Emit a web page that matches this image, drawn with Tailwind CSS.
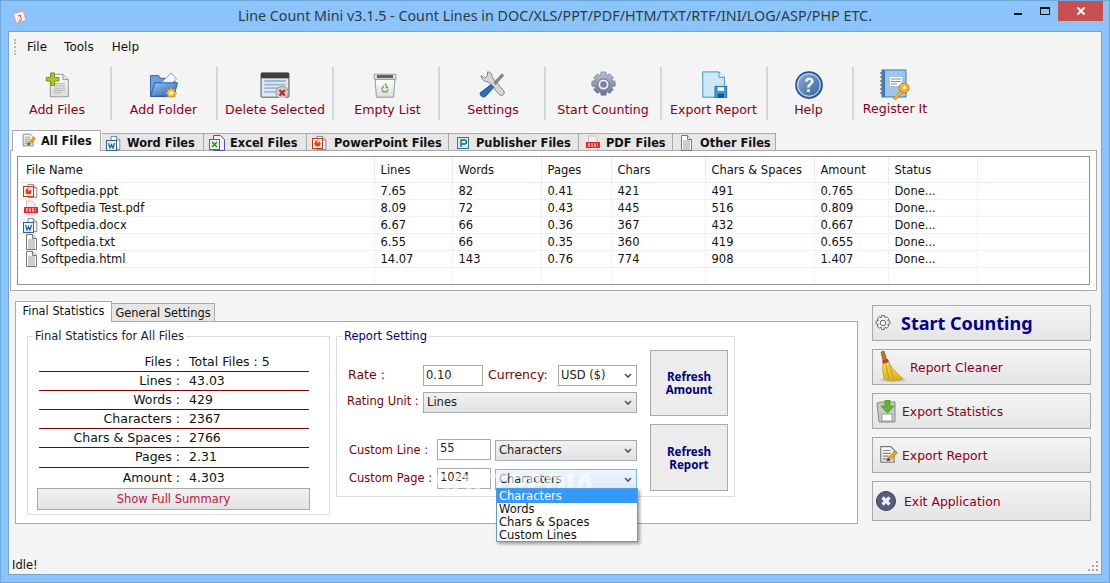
<!DOCTYPE html>
<html lang="en">
<head>
  <meta charset="UTF-8" />
  <title>Line Count Mini v3.1.5</title>
  <script src="https://cdn.jsdelivr.net/npm/@tailwindcss/browser@4"></script>
</head>
<body class="overflow-hidden">
  <!-- shared icon symbols -->
  <svg class="absolute w-0 h-0">
    <defs>
      <linearGradient id="gBlue" x1="0" y1="0" x2="1" y2="1"><stop offset="0" stop-color="#9fc8ee"/><stop offset="1" stop-color="#1c5fb8"/></linearGradient>
      <linearGradient id="gPage" x1="0" y1="0" x2="0" y2="1"><stop offset="0" stop-color="#ffffff"/><stop offset="1" stop-color="#dcdcd8"/></linearGradient>
      <linearGradient id="gHelp" x1="0" y1="0" x2="1" y2="1"><stop offset="0" stop-color="#8fb0d6"/><stop offset="1" stop-color="#2f5f9e"/></linearGradient>
      <linearGradient id="gGear" x1="0" y1="0" x2="0" y2="1"><stop offset="0" stop-color="#b9bfd8"/><stop offset="1" stop-color="#6a7090"/></linearGradient>
      <linearGradient id="gBroom" x1="0" y1="0" x2="0" y2="1"><stop offset="0" stop-color="#f5e25a"/><stop offset="1" stop-color="#dcae16"/></linearGradient>
      <symbol id="page" viewBox="0 0 16 16"><path d="M3.5.5h6l4 4v11h-10z" fill="#fff" stroke="#77787c"/><path d="M9.5.5v4h4" fill="#e6e6e6" stroke="#77787c"/></symbol>
      <symbol id="lines" viewBox="0 0 16 16"><use href="#page"/><path d="M5 6h7M5 8h7M5 10h7M5 12h7M5 14h7" stroke="#9a9a9a"/></symbol>
      <symbol id="ppt" viewBox="0 0 16 16"><use href="#page" x="2" width="14" height="16"/><rect x=".5" y="3.5" width="10" height="10" fill="#fbeee6" stroke="#c8390f"/><circle cx="5.5" cy="8.500" r="3" fill="#d8411a"/><path d="M5.500 8.500V6h2.500z" fill="#fff"/></symbol>
      <symbol id="word" viewBox="0 0 16 16"><use href="#page" x="2" width="14" height="16"/><rect x=".5" y="5.500" width="10" height="10" fill="#eaf1fa" stroke="#2c5fa5"/><polyline points="2.500,8 4,13 5.500,9.500 7,13 8.500,8" fill="none" stroke="#2c5fa5" stroke-width="1.200"/></symbol>
      <symbol id="excel" viewBox="0 0 16 16"><path d="M4.500.5h7l4 4v11h-11z" fill="#eef" stroke="#4a52a8"/><rect x=".5" y="4.500" width="10" height="10" fill="#e8f4e8" stroke="#2e8a36"/><path d="M3 7l5 5M8 7l-5 5" stroke="#1f7a2a" stroke-width="1.300"/></symbol>
      <symbol id="pdf" viewBox="0 0 16 16"><path d="M3.500 1h6l3 3v4h-9z" fill="#eee" stroke="#c9c9c9"/><rect x="1" y="7" width="14" height="6" fill="#e0282c"/><path d="M3 9h10M3 11h10" stroke="#fff" stroke-dasharray="2 1"/><path d="M3.500 13v2h9v-2" fill="#eee" stroke="#c9c9c9"/></symbol>
      <symbol id="pub" viewBox="0 0 16 16"><rect x="2.500" y="2.500" width="11" height="11" fill="#d7ecec" stroke="#2f7d8c"/><path d="M6 12V5h3.500a1.800 1.800 0 010 4H6" fill="none" stroke="#1f6b7c" stroke-width="1.400"/></symbol>
      <symbol id="note" viewBox="0 0 18 18"><path d="M2.500 1.500h9l3 3v11h-12z" fill="url(#gPage)" stroke="#77787c"/><path d="M4.500 5h7M4.500 7.500h7M4.500 10h5M4.500 12.500h4" stroke="#8a8a8a"/><path d="M8 14.500l1-3 6.500-6.500 2 2-6.500 6.500z" fill="#f2a020" stroke="#b8650c" stroke-width=".6"/><path d="M8 14.500l1-3 2 2z" fill="#3a3a3a"/></symbol>
    </defs>
  </svg>

  <div class="w-[1110px] h-[583px] bg-[#8ac4fb] border border-[#6fa6d8] flex flex-col font-['DejaVu_Sans',sans-serif] text-[#111]">
    <!-- title bar -->
    <div class="h-[30px] flex items-center relative shrink-0">
      <svg class="absolute left-[10px] top-[7px] w-[17px] h-[17px]" viewBox="0 0 17 17"><path d="M2 4l10-2.500 3 11-10 2.500z" fill="#f6f3ef" stroke="#b7b0b8"/><path d="M2.500 4l9.500-2.400.5 2-9.500 2.400z" fill="#b8acc6"/><path d="M7 8l3-.8-1 2 1.500 1-.5 2-2.500.6" fill="none" stroke="#e8504a"/></svg>
      <div class="w-full text-center font-['Noto_Sans',sans-serif] text-[14.300px] text-[#2e3a44] whitespace-nowrap">Line Count Mini v3.1.5 - Count Lines in DOC/XLS/PPT/PDF/HTM/TXT/RTF/INI/LOG/ASP/PHP ETC.</div>
      <div class="absolute left-[1013px] top-0 flex items-start">
        <div class="w-[8px] h-[2px] bg-[#111] mt-[12px]"></div>
        <div class="w-[10px] h-[8px] border border-[#111] border-t-2 mt-[6px] ml-[18px]"></div>
        <div class="w-[45px] h-[20px] bg-[#c75050] ml-[8px] flex items-center justify-center">
          <svg class="w-[10px] h-[10px]" viewBox="0 0 10 10"><path d="M1.500 1.500l7 7M8.500 1.500l-7 7" stroke="#fff" stroke-width="1.800"/></svg>
        </div>
      </div>
    </div>

    <!-- client area -->
    <div class="ml-[7px] w-[1094px] h-[544px] bg-[#f4f4f4] border border-[#6fa6d8] flex flex-col relative">
      <!-- menu -->
      <div class="h-[30px] flex items-center text-[12px] shrink-0 relative">
        <div class="ml-[5px] w-[2px] h-[16px] border-l-2 border-dotted border-[#bbb]"></div>
        <span class="ml-[11px]">File</span>
        <span class="ml-[17px]">Tools</span>
        <span class="ml-[18px]">Help</span>
      </div>

      <!-- toolbar -->
      <div class="h-[64px] flex shrink-0 border-b border-[#f9f9f9] text-[#8b0018] text-[12.600px]">
        <div class="w-[103px] pr-[5px] my-[5px] border-r-2 border-[#d6d6d6] flex flex-col items-center">
          <svg class="w-[28px] h-[29px] mt-[5px] ml-[1px]" viewBox="0 0 28 29"><path d="M5.500 2.500h14l6 6v19h-20z" fill="url(#gPage)" stroke="#8d8d8a"/><path d="M19.500 2.500v6h6" fill="#e4e4e0" stroke="#8d8d8a"/><path d="M9 13h13M9 15.500h13M9 18h13M9 20.500h13M9 23h9" stroke="#a8a8a8"/><path d="M6 1h4v5h5v4h-5v5H6v-5H1V6h5z" fill="#a9cc2a" stroke="#6a8a10"/></svg>
          <span class="mt-[3px]">Add Files</span>
        </div>
        <div class="w-[106px] my-[5px] border-r-2 border-[#d6d6d6] flex flex-col items-center">
          <svg class="w-[32px] h-[29px] mt-[5px]" viewBox="0 0 32 29"><path d="M1 4h9l2 3h16v20H1z" fill="#6aa0e0" stroke="#2b5ea8"/><path d="M12 13L24 1l6 7-8 7z" fill="#f4f8fc" stroke="#7d97bd"/><path d="M1 27l5-15h25l-4 15z" fill="url(#gBlue)" stroke="#1f55a2"/><path d="M24 17l1.500 3 3-1-1 3 3 1.500-3 1.500 1 3-3-1-1.500 3-1.500-3-3 1 1-3-3-1.500 3-1.500-1-3 3 1z" fill="#fbc42a" stroke="#d98a0a" stroke-width=".5"/><circle cx="24" cy="23.500" r="2" fill="#fff4b0"/></svg>
          <span class="mt-[3px] -ml-[1px]">Add Folder</span>
        </div>
        <div class="w-[116px] my-[5px] border-r-2 border-[#d6d6d6] flex flex-col items-center">
          <svg class="w-[32px] h-[29px] mt-[5px] -ml-[1px]" viewBox="0 0 32 29"><rect x=".5" y="1" width="31" height="27" rx="1" fill="#dfe6ee" stroke="#444"/><rect x=".5" y="1" width="31" height="6" fill="#3e3e3e"/><path d="M4 10h24M4 14h24M4 18h20M4 22h18" stroke="#9cbad6" stroke-width="2"/><circle cx="24" cy="23" r="7" fill="#cfcfcf" stroke="#8a8a8a"/><path d="M21 20l6 6M27 20l-6 6" stroke="#d8182a" stroke-width="2.400"/></svg>
          <span class="mt-[3px]">Delete Selected</span>
        </div>
        <div class="w-[106px] my-[5px] border-r-2 border-[#d6d6d6] flex flex-col items-center">
          <svg class="w-[26px] h-[29px] mt-[5px] -ml-[2px]" viewBox="0 0 26 29"><path d="M2 8h22l-1.500 20h-19z" fill="url(#gPage)" stroke="#8d8d8a"/><path d="M1 2.500h24V8H1z" fill="#ececea" stroke="#8d8d8a"/><rect x="4" y="3.500" width="18" height="3" fill="#555"/><path d="M13 13l2.500 4-2 .5M9.500 19l2-3.500M16.500 19l-1.500 3h-4l-1.500-3" fill="none" stroke="#66b04a" stroke-width="1.600"/></svg>
          <span class="mt-[3px] ml-[3px]">Empty List</span>
        </div>
        <div class="w-[106px] my-[5px] border-r-2 border-[#d6d6d6] flex flex-col items-center">
          <svg class="w-[30px] h-[30px] mt-[4px]" viewBox="0 0 30 30"><path d="M10 1c3 0 5 2 5 5l1 2 12 14c2 3-2 7-5 4L11 12c-4 0-8-2-8-7l4 3 3-3z" fill="#d6d6d6" stroke="#777"/><path d="M26 3l2 2-9 10-2-2z" fill="#8a8a8a" stroke="#555" stroke-width=".6"/><path d="M14 15l3 3-9 10c-2 2-7 0-6-4z" fill="#2f6fbf" stroke="#1b4c90"/></svg>
          <span class="mt-[3px] ml-[2px]">Settings</span>
        </div>
        <div class="w-[116px] my-[5px] border-r-2 border-[#d6d6d6] flex flex-col items-center">
          <svg class="w-[29px] h-[30px] mt-[4px]" viewBox="0 0 29 29"><path d="M12 1h5l1 4 3-2 4 4-2 3 4 1v5l-4 1 2 3-4 4-3-2-1 4h-5l-1-4-3 2-4-4 2-3-4-1v-5l4-1-2-3 4-4 3 2z" fill="url(#gGear)" stroke="#6a6a80" stroke-width=".6"/><circle cx="14.500" cy="14.500" r="6" fill="#eef0f6" stroke="#5c6080"/><circle cx="14.500" cy="14.500" r="3.500" fill="#7a809e"/></svg>
          <span class="mt-[3px]">Start Counting</span>
        </div>
        <div class="w-[106px] my-[5px] border-r-2 border-[#d6d6d6] flex flex-col items-center">
          <svg class="w-[29px] h-[30px] mt-[4px]" viewBox="0 0 29 30"><path d="M1.500 1h18l6 6v22h-24z" fill="#cfe6f6" stroke="#2a8ec8"/><path d="M19.500 1v6h6" fill="#fff" stroke="#2a8ec8"/><rect x="15" y="17" width="13" height="13" fill="#3a9ad8" stroke="#1f6ea6"/><rect x="18" y="18" width="7" height="4" fill="#fff"/><rect x="18" y="25" width="7" height="5" fill="#0f5a8c"/></svg>
          <span class="mt-[3px] -ml-[1px]">Export Report</span>
        </div>
        <div class="w-[86px] my-[5px] border-r-2 border-[#d6d6d6] flex flex-col items-center">
          <svg class="w-[30px] h-[30px] mt-[4px] -ml-[3px]" viewBox="0 0 30 30"><circle cx="15" cy="15" r="14" fill="url(#gHelp)" stroke="#1f4f8f" stroke-width="1.500"/><circle cx="15" cy="15" r="12" fill="none" stroke="#dfe8f2"/><path d="M10.500 11.500c0-6 9.500-6 9.500-.5 0 3.500-4 3.500-4 6.500h-3c0-4 4-4 4-6.500 0-2-3.200-2-3.500.5z" fill="#e8eef6"/><rect x="13" y="19.500" width="3" height="3" fill="#e8eef6"/></svg>
          <span class="mt-[2px] -ml-[3px]">Help</span>
        </div>
        <div class="w-[84px] flex flex-col items-center">
          <svg class="w-[32px] h-[33px] mt-[6px] -ml-[2px]" viewBox="0 0 32 33"><rect x="3" y="2" width="24" height="27" fill="#9cc6ec" stroke="#3a78b8"/><rect x="3" y="2" width="3" height="27" fill="#3a78b8"/><rect x="11" y="9" width="12" height="9" fill="#fff"/><path d="M12 11h10M12 13.500h10M12 16h6" stroke="#888"/><path d="M1 5h4M1 9h4M1 13h4M1 17h4M1 21h4M1 25h4" stroke="#777" stroke-width="1.400"/><circle cx="25" cy="20" r="5" fill="#f2b23c" stroke="#c47e12"/><circle cx="25.500" cy="19.500" r="1.500" fill="#fff"/><path d="M22 23l-8 7 2 2 3-2 1-2 4-3z" fill="#f2b23c" stroke="#c47e12" stroke-width=".7"/></svg>
          <span class="-mt-[1px] -ml-[2px]">Register It</span>
        </div>
      </div>

      <!-- file type tabs -->
      <div class="flex items-end h-[25px] ml-[3px] text-[11.400px] font-bold shrink-0 relative z-10">
        <div class="h-[21px] w-[89px] bg-white border border-[#a9a9a9] border-b-0 flex items-center pl-[8px] pt-[1px] gap-[5px] text-[#111]"><svg class="w-[15px] h-[15px] -mt-[3px]" viewBox="0 0 18 18"><use href="#note"/></svg>All Files</div>
        <div class="h-[18px] w-[102px] bg-[#e6e6e6] border border-[#a9a9a9] border-l-0 flex items-center pl-[4px] pt-[4px] gap-[5px] ml-[1px]"><svg class="w-[16px] h-[16px] -mt-[3px]"><use href="#word"/></svg>Word Files</div>
        <div class="h-[18px] w-[103px] bg-[#e6e6e6] border border-[#a9a9a9] border-l-0 flex items-center pl-[5px] pt-[4px] gap-[5px]"><svg class="w-[16px] h-[16px] -mt-[3px]"><use href="#excel"/></svg>Excel Files</div>
        <div class="h-[18px] w-[142px] bg-[#e6e6e6] border border-[#a9a9a9] border-l-0 flex items-center pl-[5px] pt-[4px] gap-[6px]"><svg class="w-[16px] h-[16px] -mt-[3px]"><use href="#ppt"/></svg>PowerPoint Files</div>
        <div class="h-[18px] w-[130px] bg-[#e6e6e6] border border-[#a9a9a9] border-l-0 flex items-center pl-[6px] pt-[4px] gap-[5px]"><svg class="w-[16px] h-[16px] -mt-[3px]"><use href="#pub"/></svg>Publisher Files</div>
        <div class="h-[18px] w-[94px] bg-[#e6e6e6] border border-[#a9a9a9] border-l-0 flex items-center pl-[6px] pt-[4px] gap-[5px]"><svg class="w-[16px] h-[16px] -mt-[3px]"><use href="#pdf"/></svg>PDF Files</div>
        <div class="h-[18px] w-[103px] bg-[#e6e6e6] border border-[#a9a9a9] border-l-0 flex items-center pl-[5px] pt-[4px] gap-[6px]"><svg class="w-[16px] h-[16px] -mt-[3px]"><use href="#lines"/></svg>Other Files</div>
      </div>

      <!-- file list panel -->
      <div class="ml-[1px] w-[1087px] h-[141px] -mt-[1px] bg-white border border-[#a9a9a9] px-[6px] pt-[5px] shrink-0">
        <div class="h-[129px] border border-[#8f8f8f] text-[11.500px] leading-[15px] overflow-hidden">
          <table class="table-fixed w-[1071px] border-collapse">
            <colgroup><col class="w-[356px]"/><col class="w-[78px]"/><col class="w-[89px]"/><col class="w-[70px]"/><col class="w-[94px]"/><col class="w-[109px]"/><col class="w-[74px]"/><col class="w-[89px]"/><col/></colgroup>
            <thead>
              <tr class="h-[25px] text-left border-b border-[#e4ecf6]">
                <th class="font-normal pl-[8px] pt-[2px] border-r border-[#e4ecf6]">File Name</th><th class="font-normal pl-[6px] pt-[2px] border-r border-[#e4ecf6]">Lines</th><th class="font-normal pl-[6px] pt-[2px] border-r border-[#e4ecf6]">Words</th><th class="font-normal pl-[6px] pt-[2px] border-r border-[#e4ecf6]">Pages</th><th class="font-normal pl-[6px] pt-[2px] border-r border-[#e4ecf6]">Chars</th><th class="font-normal pl-[6px] pt-[2px] border-r border-[#e4ecf6]">Chars &amp; Spaces</th><th class="font-normal pl-[6px] pt-[2px] border-r border-[#e4ecf6]">Amount</th><th class="font-normal pl-[6px] pt-[2px] border-r border-[#e4ecf6]">Status</th><th></th>
              </tr>
            </thead>
            <tbody>
              <tr class="h-[17px] border-b border-[#eef2f8]"><td class="border-r border-[#eef2f8] pl-[5px]"><div class="flex items-center h-[16px] gap-[2px] pt-[1px]"><svg class="w-[16px] h-[16px] shrink-0 -mt-[1px]"><use href="#ppt"/></svg>Softpedia.ppt</div></td><td class="border-r border-[#eef2f8] pl-[6px] pt-[1px]">7.65</td><td class="border-r border-[#eef2f8] pl-[6px] pt-[1px]">82</td><td class="border-r border-[#eef2f8] pl-[6px] pt-[1px]">0.41</td><td class="border-r border-[#eef2f8] pl-[6px] pt-[1px]">421</td><td class="border-r border-[#eef2f8] pl-[6px] pt-[1px]">491</td><td class="border-r border-[#eef2f8] pl-[6px] pt-[1px]">0.765</td><td class="border-r border-[#eef2f8] pl-[6px] pt-[1px]">Done...</td><td></td></tr>
              <tr class="h-[17px] border-b border-[#eef2f8]"><td class="border-r border-[#eef2f8] pl-[5px]"><div class="flex items-center h-[16px] gap-[2px] pt-[1px]"><svg class="w-[16px] h-[16px] shrink-0 -mt-[1px]"><use href="#pdf"/></svg>Softpedia Test.pdf</div></td><td class="border-r border-[#eef2f8] pl-[6px] pt-[1px]">8.09</td><td class="border-r border-[#eef2f8] pl-[6px] pt-[1px]">72</td><td class="border-r border-[#eef2f8] pl-[6px] pt-[1px]">0.43</td><td class="border-r border-[#eef2f8] pl-[6px] pt-[1px]">445</td><td class="border-r border-[#eef2f8] pl-[6px] pt-[1px]">516</td><td class="border-r border-[#eef2f8] pl-[6px] pt-[1px]">0.809</td><td class="border-r border-[#eef2f8] pl-[6px] pt-[1px]">Done...</td><td></td></tr>
              <tr class="h-[17px] border-b border-[#eef2f8]"><td class="border-r border-[#eef2f8] pl-[5px]"><div class="flex items-center h-[16px] gap-[2px] pt-[1px]"><svg class="w-[16px] h-[16px] shrink-0 -mt-[1px]"><use href="#word"/></svg>Softpedia.docx</div></td><td class="border-r border-[#eef2f8] pl-[6px] pt-[1px]">6.67</td><td class="border-r border-[#eef2f8] pl-[6px] pt-[1px]">66</td><td class="border-r border-[#eef2f8] pl-[6px] pt-[1px]">0.36</td><td class="border-r border-[#eef2f8] pl-[6px] pt-[1px]">367</td><td class="border-r border-[#eef2f8] pl-[6px] pt-[1px]">432</td><td class="border-r border-[#eef2f8] pl-[6px] pt-[1px]">0.667</td><td class="border-r border-[#eef2f8] pl-[6px] pt-[1px]">Done...</td><td></td></tr>
              <tr class="h-[17px] border-b border-[#eef2f8]"><td class="border-r border-[#eef2f8] pl-[5px]"><div class="flex items-center h-[16px] gap-[2px] pt-[1px]"><svg class="w-[16px] h-[16px] shrink-0 -mt-[1px]"><use href="#lines"/></svg>Softpedia.txt</div></td><td class="border-r border-[#eef2f8] pl-[6px] pt-[1px]">6.55</td><td class="border-r border-[#eef2f8] pl-[6px] pt-[1px]">66</td><td class="border-r border-[#eef2f8] pl-[6px] pt-[1px]">0.35</td><td class="border-r border-[#eef2f8] pl-[6px] pt-[1px]">360</td><td class="border-r border-[#eef2f8] pl-[6px] pt-[1px]">419</td><td class="border-r border-[#eef2f8] pl-[6px] pt-[1px]">0.655</td><td class="border-r border-[#eef2f8] pl-[6px] pt-[1px]">Done...</td><td></td></tr>
              <tr class="h-[17px] border-b border-[#eef2f8]"><td class="border-r border-[#eef2f8] pl-[5px]"><div class="flex items-center h-[16px] gap-[2px] pt-[1px]"><svg class="w-[16px] h-[16px] shrink-0 -mt-[1px]"><use href="#lines"/></svg>Softpedia.html</div></td><td class="border-r border-[#eef2f8] pl-[6px] pt-[1px]">14.07</td><td class="border-r border-[#eef2f8] pl-[6px] pt-[1px]">143</td><td class="border-r border-[#eef2f8] pl-[6px] pt-[1px]">0.76</td><td class="border-r border-[#eef2f8] pl-[6px] pt-[1px]">774</td><td class="border-r border-[#eef2f8] pl-[6px] pt-[1px]">908</td><td class="border-r border-[#eef2f8] pl-[6px] pt-[1px]">1.407</td><td class="border-r border-[#eef2f8] pl-[6px] pt-[1px]">Done...</td><td></td></tr>
              <tr class="h-[17px]"><td class="border-r border-[#eef2f8]"></td><td class="border-r border-[#eef2f8]"></td><td class="border-r border-[#eef2f8]"></td><td class="border-r border-[#eef2f8]"></td><td class="border-r border-[#eef2f8]"></td><td class="border-r border-[#eef2f8]"></td><td class="border-r border-[#eef2f8]"></td><td class="border-r border-[#eef2f8]"></td><td></td></tr>
            </tbody>
          </table>
        </div>
      </div>

      <!-- bottom section -->
      <div class="flex mt-[10px] ml-[6px]">
        <div class="w-[843px] shrink-0 relative">
          <div class="flex items-end h-[21px] text-[11.400px] relative z-10">
            <div class="h-[21px] w-[97px] bg-white border border-[#a9a9a9] border-b-0 text-center leading-[18px]">Final Statistics</div>
            <div class="h-[19px] w-[103px] bg-[#e6e6e6] border border-[#a9a9a9] border-l-0 text-center leading-[19px]">General Settings</div>
          </div>
          <div class="h-[203px] -mt-[1px] bg-white border border-[#a9a9a9] flex pl-[11px] pt-[6px] gap-[6px] items-start relative">
            <fieldset class="w-[303px] h-[187px] border border-[#dcdcdc] text-[12.500px]">
              <legend class="ml-[5px] px-[2px] text-[11.500px] text-[#1a1a3a]">Final Statistics for All Files</legend>
              <div class="mt-[8px] mx-[11px] w-[270px]">
                <div class="flex h-[19px] items-center border-b border-[#800000]"><span class="w-[141px] text-right">Files :</span><span class="ml-[9px]">Total Files : 5</span></div>
                <div class="flex h-[19px] items-center border-b border-[#800000]"><span class="w-[141px] text-right">Lines :</span><span class="ml-[9px]">43.03</span></div>
                <div class="flex h-[19px] items-center border-b border-[#800000]"><span class="w-[141px] text-right">Words :</span><span class="ml-[9px]">429</span></div>
                <div class="flex h-[19px] items-center border-b border-[#800000]"><span class="w-[141px] text-right">Characters :</span><span class="ml-[9px]">2367</span></div>
                <div class="flex h-[19px] items-center border-b border-[#800000]"><span class="w-[141px] text-right">Chars &amp; Spaces :</span><span class="ml-[9px]">2766</span></div>
                <div class="flex h-[20px] items-center border-b border-[#800000]"><span class="w-[141px] text-right">Pages :</span><span class="ml-[9px]">2.31</span></div>
                <div class="flex h-[20px] items-center"><span class="w-[141px] text-right">Amount :</span><span class="ml-[9px]">4.303</span></div>
              </div>
              <div class="ml-[9px] w-[273px] h-[22px] border border-[#a9a9a9] bg-gradient-to-b from-[#f2f2f2] to-[#e2e2e2] text-[#c0143c] text-[11.500px] text-center leading-[20px]">Show Full Summary</div>
            </fieldset>

            <fieldset class="w-[399px] h-[169px] border border-[#dcdcdc] flex relative">
              <legend class="ml-[5px] px-[2px] text-[11.500px] text-[#000080]">Report Setting</legend>
              <div class="w-[313px] shrink-0 pl-[10px] text-[#800000]">
                <div class="flex items-center h-[21px] mt-[20px]">
                  <span class="w-[76px] text-[12.500px] pl-[1px]">Rate :</span>
                  <div class="w-[60px] h-[21px] border border-[#a9a9a9] bg-white text-[#222] text-[11.500px] pl-[2px] leading-[18px]">0.10</div>
                  <span class="ml-[5px] w-[70px] text-[12.500px]">Currency:</span>
                  <div class="w-[79px] h-[21px] border border-[#a9a9a9] bg-white text-[#222] text-[11.500px] pl-[2px] leading-[18px] flex justify-between">USD ($)<svg class="w-[8px] h-[6px] mt-[7px] mr-[4px]" viewBox="0 0 8 6"><path d="M1 1l3 3 3-3" fill="none" stroke="#555" stroke-width="1.600"/></svg></div>
                </div>
                <div class="flex items-center h-[21px] mt-[6px]">
                  <span class="w-[76px] text-[11.500px] -mt-[3px]">Rating Unit :</span>
                  <div class="w-[214px] h-[21px] border border-[#a9a9a9] bg-gradient-to-b from-[#f2f2f2] to-[#e2e2e2] text-[#222] text-[11.500px] pl-[3px] leading-[19px] flex justify-between">Lines<svg class="w-[8px] h-[6px] mt-[7px] mr-[4px]" viewBox="0 0 8 6"><path d="M1 1l3 3 3-3" fill="none" stroke="#555" stroke-width="1.600"/></svg></div>
                </div>
                <div class="flex items-center h-[22px] mt-[26px]">
                  <span class="w-[90px] text-[11.500px] pl-[2px]"><span class="block w-[88px]">Custom Line :</span></span>
                  <div class="w-[54px] h-[21px] border border-[#a9a9a9] bg-white text-[#222] text-[11.500px] pl-[2px] leading-[16px] -mt-[1px]">55</div>
                  <div class="ml-[4px] w-[142px] h-[21px] border border-[#a9a9a9] bg-gradient-to-b from-[#f2f2f2] to-[#e2e2e2] text-[#222] text-[11.500px] pl-[3px] leading-[18px] flex justify-between">Characters<svg class="w-[8px] h-[6px] mt-[7px] mr-[4px]" viewBox="0 0 8 6"><path d="M1 1l3 3 3-3" fill="none" stroke="#555" stroke-width="1.600"/></svg></div>
                </div>
                <div class="flex items-center h-[22px] mt-[7px]">
                  <span class="w-[90px] text-[11.500px] pl-[2px] -mt-[2px]">Custom Page :</span>
                  <div class="w-[54px] h-[21px] border border-[#a9a9a9] bg-white text-[#222] text-[11.500px] pl-[2px] leading-[16px] -mt-[1px]">1024</div>
                  <div class="ml-[4px] w-[142px] h-[21px] border border-[#7eb4ea] bg-gradient-to-b from-[#ecf4fc] to-[#dcecfc] text-[#222] text-[11.500px] pl-[3px] leading-[19px] flex justify-between">Characters<svg class="w-[8px] h-[6px] mt-[7px] mr-[4px]" viewBox="0 0 8 6"><path d="M1 1l3 3 3-3" fill="none" stroke="#555" stroke-width="1.600"/></svg></div>
                </div>
              </div>
              <div class="w-[78px] shrink-0 mt-[5px] text-[#000080] font-['Noto_Sans',sans-serif] font-bold text-[11.600px] leading-[13px] text-center flex flex-col gap-[8px]">
                <div class="h-[66px] border border-[#a9a9a9] bg-[#ececec] flex items-center justify-center">Refresh<br/>Amount</div>
                <div class="h-[67px] border border-[#a9a9a9] bg-[#ececec] flex items-center justify-center">Refresh<br/>Report</div>
              </div>
            </fieldset>

            <!-- watermark over the form -->
            <div class="absolute left-[416px] top-[145px] text-[27px] leading-[36px] font-bold text-white/60 tracking-[-1px] pointer-events-none">SOFTPEDIA</div>
            <!-- open combo list -->
            <div class="absolute left-[480px] top-[166px] w-[142px] h-[54px] bg-white border border-[#5c9ad8] shadow-[2px_2px_3px_rgba(0,0,0,0.35)] text-[11.500px] leading-[13px] z-20">
              <div class="bg-[#3399ff] text-white pl-[2px] pt-[1px] h-[14px]">Characters</div>
              <div class="pl-[2px]">Words</div>
              <div class="pl-[2px]">Chars &amp; Spaces</div>
              <div class="pl-[2px]">Custom Lines</div>
            </div>
          </div>
        </div>

        <!-- action buttons -->
        <div class="ml-[14px] mt-[4px] w-[219px] flex flex-col gap-[8px] text-[#8b0018] text-[12.400px]">
          <div class="h-[36px] border border-[#a9a9a9] bg-gradient-to-b from-[#f4f4f4] to-[#e4e4e4] flex items-center pl-[2px]">
            <svg class="w-[16px] h-[16px]" viewBox="0 0 29 29"><path d="M12 1h5l1 4 3-2 4 4-2 3 4 1v5l-4 1 2 3-4 4-3-2-1 4h-5l-1-4-3 2-4-4 2-3-4-1v-5l4-1-2-3 4-4 3 2z" fill="#f0f0f0" stroke="#555" stroke-width="1.600"/><circle cx="14.500" cy="14.500" r="5" fill="#fff" stroke="#555" stroke-width="1.600"/></svg>
            <span class="ml-[10px] font-['Noto_Sans',sans-serif] text-[18px] font-bold text-[#00008b]">Start Counting</span>
          </div>
          <div class="h-[36px] border border-[#a9a9a9] bg-gradient-to-b from-[#f4f4f4] to-[#e4e4e4] flex items-center pl-[3px] pt-[2px]">
            <svg class="w-[30px] h-[32px] -mt-[2px]" viewBox="0 0 30 32"><ellipse cx="17" cy="29" rx="13" ry="2.500" fill="#ccc"/><path d="M5 1l3-1 3 9-4 1z" fill="#b07a30" stroke="#7a4f18" stroke-width=".6"/><path d="M6 10l6-2 1 3-6 2z" fill="#d03030"/><path d="M7 13l6-2c2 6 9 12 14 17-6 2-15 2-19 0-1-5-2-10-1-15z" fill="url(#gBroom)" stroke="#b08a12" stroke-width=".6"/><path d="M10 14l3 14M13 13l5 15" stroke="#c49a18"/></svg>
            <span class="ml-[4px]">Report Cleaner</span>
          </div>
          <div class="h-[36px] border border-[#a9a9a9] bg-gradient-to-b from-[#f4f4f4] to-[#e4e4e4] flex items-center pl-[3px] pt-[2px]">
            <svg class="w-[21px] h-[23px] -mt-[2px]" viewBox="0 0 21 23"><path d="M1 3l5-1h13v20H3z" fill="#c9c9c4" stroke="#888"/><rect x="6" y="14" width="10" height="7" fill="#fff" stroke="#999"/><path d="M9 0h5v6h4l-6.500 7L5 6h4z" fill="#5cb82e" stroke="#3a8a1a" stroke-width=".6"/></svg>
            <span class="ml-[5px]">Export Statistics</span>
          </div>
          <div class="h-[36px] border border-[#a9a9a9] bg-gradient-to-b from-[#f4f4f4] to-[#e4e4e4] flex items-center pl-[5px] pt-[2px]">
            <svg class="w-[20px] h-[22px] -mt-[2px]" viewBox="0 0 18 18"><use href="#note"/></svg>
            <span class="ml-[4px]">Export Report</span>
          </div>
          <div class="h-[40px] border border-[#a9a9a9] bg-gradient-to-b from-[#f4f4f4] to-[#e4e4e4] flex items-center pl-[3px] pt-[2px]">
            <svg class="w-[20px] h-[20px] -mt-[2px]" viewBox="0 0 20 20"><circle cx="10" cy="10" r="9.500" fill="#5a5a7e" stroke="#3a3a55"/><path d="M6.500 6.500l7 7M13.500 6.500l-7 7" stroke="#f0f0f4" stroke-width="3.200"/></svg>
            <span class="ml-[8px]">Exit Application</span>
          </div>
        </div>
      </div>

      <!-- status bar -->
      <div class="absolute left-[3px] bottom-0 text-[11.500px]">Idle!</div>
      <svg class="absolute right-[2px] bottom-[2px] w-[11px] h-[11px]" viewBox="0 0 11 11"><path d="M8 0h2v2H8zM4 4h2v2H4zM8 4h2v2H8zM0 8h2v2H0zM4 8h2v2H4zM8 8h2v2H8z" fill="#a8a8a8"/></svg>
    </div>
  </div>
</body>
</html>
